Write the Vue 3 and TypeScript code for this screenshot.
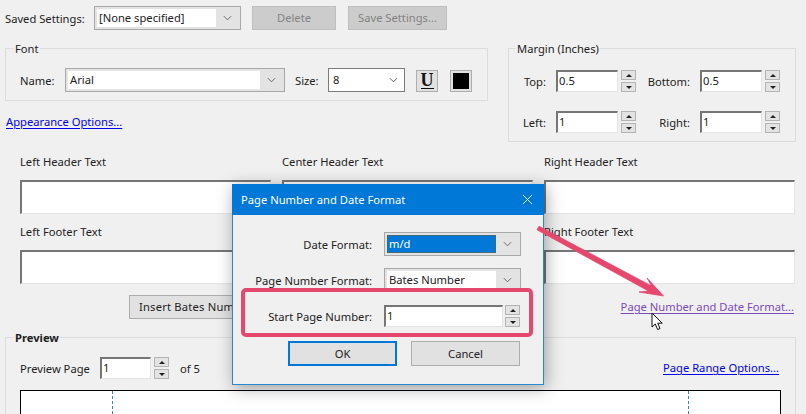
<script setup lang="ts">
const marginRows = [
  [{ label: 'Top:', value: '0.5' }, { label: 'Bottom:', value: '0.5' }],
  [{ label: 'Left:', value: '1' }, { label: 'Right:', value: '1' }],
]
const headerFields = [
  'Left Header Text', 'Center Header Text', 'Right Header Text',
  'Left Footer Text', '', 'Right Footer Text',
]
</script>

<template>
  <div class="page">
    <div class="top-row">
      <span class="saved-label">Saved Settings:</span>
      <div class="select saved-select">
        <span class="select-value">[None specified]</span>
        <svg class="chev" viewBox="0 0 10 6"><path d="M1 1l4 4 4-4" /></svg>
      </div>
      <button class="btn disabled delete-btn">Delete</button>
      <button class="btn disabled save-btn">Save Settings...</button>
    </div>

    <div class="groups">
      <div class="left-col">
        <div class="group font-group">
          <span class="legend">Font</span>
          <span class="name-label">Name:</span>
          <div class="select name-select">
            <span class="select-value">Arial</span>
            <svg class="chev" viewBox="0 0 10 6"><path d="M1 1l4 4 4-4" /></svg>
          </div>
          <span class="size-label">Size:</span>
          <div class="select size-select">
            <span class="select-value">8</span>
            <svg class="chev" viewBox="0 0 10 6"><path d="M1 1l4 4 4-4" /></svg>
          </div>
          <button class="icon-btn u-btn"><span class="u-glyph">U</span></button>
          <button class="icon-btn color-btn"><span class="swatch"></span></button>
        </div>
        <a class="link appearance">Appearance Options...</a>
      </div>

      <div class="group margin-group">
        <span class="legend margin-legend">Margin (Inches)</span>
        <div v-for="(row, r) in marginRows" :key="r" class="margin-row">
          <template v-for="f in row" :key="f.label">
            <span class="margin-label">{{ f.label }}</span>
            <div class="input margin-input">{{ f.value }}</div>
            <div class="spin">
              <span class="spin-btn"><i class="up"></i></span>
              <span class="spin-btn"><i class="down"></i></span>
            </div>
          </template>
        </div>
      </div>
    </div>

    <div class="text-grid">
      <div v-for="(f, i) in headerFields" :key="i" class="text-field">
        <span class="text-label">{{ f }}</span>
        <div class="input text-input"></div>
      </div>
    </div>

    <div class="bates-row">
      <button class="btn bates-btn">Insert Bates Number...</button>
      <a class="link visited">Page Number and Date Format...</a>
    </div>

    <div class="group preview-group">
      <span class="legend bold">Preview</span>
      <div class="preview-row">
        <span class="preview-label">Preview Page</span>
        <div class="input preview-input">1</div>
        <div class="spin">
          <span class="spin-btn"><i class="up"></i></span>
          <span class="spin-btn"><i class="down"></i></span>
        </div>
        <span class="of-label">of 5</span>
        <a class="link range-link">Page Range Options...</a>
      </div>
      <div class="preview-box">
        <span class="guide guide-left"></span>
        <span class="guide guide-right"></span>
      </div>
    </div>

    <div class="dialog">
      <div class="title-bar">
        <span>Page Number and Date Format</span>
        <svg class="close" viewBox="0 0 12 12"><path d="M1 1l10 10M11 1L1 11" /></svg>
      </div>
      <div class="dialog-body">
        <div class="dialog-row date-row">
          <span class="dialog-label">Date Format:</span>
          <div class="select dialog-select">
            <span class="select-value selected">m/d</span>
            <svg class="chev" viewBox="0 0 10 6"><path d="M1 1l4 4 4-4" /></svg>
          </div>
        </div>
        <div class="dialog-row number-row">
          <span class="dialog-label">Page Number Format:</span>
          <div class="select dialog-select">
            <span class="select-value">Bates Number</span>
            <svg class="chev" viewBox="0 0 10 6"><path d="M1 1l4 4 4-4" /></svg>
          </div>
        </div>
        <div class="dialog-row start-row">
          <span class="dialog-label">Start Page Number:</span>
          <div class="input start-input">1</div>
          <div class="spin">
            <span class="spin-btn"><i class="up"></i></span>
            <span class="spin-btn"><i class="down"></i></span>
          </div>
        </div>
        <div class="dialog-actions">
          <button class="btn dlg-btn primary">OK</button>
          <button class="btn dlg-btn">Cancel</button>
        </div>
      </div>
    </div>

    <div class="highlight"></div>

    <svg class="arrow" viewBox="0 0 806 414">
      <path d="M539 226.200L651.400 285.900L647 278L663.500 296L639 292L648.600 291.100L537 229.800Z" fill="#e5476d" stroke="#e5476d" stroke-width="0.800" stroke-linejoin="round" />
    </svg>

    <svg class="cursor" viewBox="0 0 13 19">
      <path d="M1 1v14l3.300-3 2.300 5.500 2.400-1-2.300-5.300h4.500Z" fill="#fff" stroke="#111" stroke-width="1" stroke-linejoin="round" />
    </svg>
  </div>
</template>

<style>
html, body { margin: 0; background: #f0f0f0; }
</style>

<style scoped>
.page {
  position: relative;
  width: 806px;
  height: 414px;
  overflow: hidden;
  box-sizing: border-box;
  padding-top: 5px;
  background: #f0f0f0;
  color: #222;
  font: 11.2px/16px "Noto Sans", "Open Sans", sans-serif;
}
.page * { box-sizing: border-box; }

.top-row { display: flex; align-items: center; height: 25px; padding-left: 5px; }
.saved-label { width: 89px; position: relative; top: 1px; }
.saved-select { width: 147px; height: 24px; }
.delete-btn { width: 84px; height: 24px; margin-left: 11px; }
.save-btn { width: 99px; height: 24px; margin-left: 12px; }

.select {
  display: flex;
  align-items: center;
  border: 1px solid #a8a8a8;
  background: #e3e3e3;
  padding: 2px;
}
.select-value {
  flex: 1;
  height: 100%;
  background: #fff;
  padding-left: 2px;
  line-height: 17px;
}
.select-value.selected {
  background: #0078d7;
  color: #fff;
  outline: 1px dotted #7a5a20;
  outline-offset: -1px;
}
.chev { width: 9px; height: 6px; margin: 0 6px 0 7px; flex: none; }
.chev path { fill: none; stroke: #666; stroke-width: 1.100; }

.btn {
  font: inherit;
  color: #222;
  background: #e1e1e1;
  border: 1px solid #adadad;
  padding: 0;
}
.btn.disabled { background: #ccc; border-color: #bfbfbf; color: #838383; }

.groups { display: flex; align-items: flex-start; margin-top: 18px; }
.left-col { width: 508px; padding-left: 5px; }
.group { position: relative; border: 1px solid #dcdcdc; }
.legend {
  position: absolute;
  top: -8px;
  left: 8px;
  padding: 0 1px 0 1px;
  background: #f0f0f0;
}
.margin-legend { left: 7px; }
.legend.bold { font-weight: 700; }

.font-group {
  display: flex;
  align-items: center;
  width: 483px;
  height: 53px;
  padding: 10px 0 0 14px;
}
.name-label { width: 45px; position: relative; top: 1px; }
.name-select { width: 220px; height: 24px; }
.size-label { margin-left: 10px; width: 33px; position: relative; top: 1px; }
.size-select { width: 77px; height: 24px; border-color: #7a7a7a; background: #fff; padding: 2px 0 2px 2px; }
.icon-btn {
  display: flex;
  align-items: center;
  justify-content: center;
  width: 22px;
  height: 22px;
  padding: 0;
  margin-top: 2px;
  background: #e1e1e1;
  border: 1px solid #adadad;
}
.u-btn { margin-left: 11px; }
.color-btn { margin-left: 12px; }
.u-glyph {
  font: 700 18px/15px "Liberation Serif", serif;
  color: #111;
  border-bottom: 1.500px solid #111;
  padding: 0;
}
.swatch { width: 16px; height: 16px; background: #000; }

.link { color: #0000ee; text-decoration: underline; text-underline-offset: 2px; }
.link.visited { color: #7d4bb8; }
.appearance { display: block; margin: 13px 0 0 1px; }

.margin-group { width: 288px; height: 94px; padding-top: 21px; }
.margin-row { display: grid; grid-template-columns: 47px 62px 15px 67px 62px 15px; align-items: center; height: 22px; margin-bottom: 19px; }
.margin-label { text-align: right; padding-right: 10px; white-space: nowrap; position: relative; top: 1px; }
.margin-row .spin { margin-left: 3px; }

.input {
  border-style: solid;
  border-width: 2px 1.500px 1.500px 2px;
  border-color: #767676 #e4e4e4 #e4e4e4 #767676;
  background: #fff;
  padding-left: 1px;
  line-height: 17px;
}
.margin-input { height: 22px; }

.spin { display: flex; flex-direction: column; justify-content: space-between; width: 15px; height: 22px; }
.spin-btn {
  display: flex;
  align-items: center;
  justify-content: center;
  height: 10px;
  background: #e3e3e3;
  border: 1px solid #b4b4b4;
}
.spin i { width: 0; height: 0; border-left: 3px solid transparent; border-right: 3px solid transparent; }
.spin i.up { border-bottom: 3px solid #222; }
.spin i.down { border-top: 3px solid #222; }

.text-grid {
  display: grid;
  grid-template-columns: repeat(3, 251px);
  column-gap: 11px;
  row-gap: 9px;
  margin: 11px 0 0 20px;
}
.text-label { display: block; height: 16px; margin-bottom: 11px; padding-top: 1px; }
.text-input { height: 34px; }

.bates-row { display: flex; align-items: center; height: 24px; margin-top: 11px; padding-left: 129px; }
.bates-btn { width: 250px; height: 24px; text-align: left; padding-left: 9px; letter-spacing: 0.2px; }
.bates-row .link { margin-left: auto; margin-right: 12px; }

.preview-group { width: 791px; height: 120px; margin: 18px 0 0 5px; padding: 19px 0 0 14px; }
.preview-row { display: flex; align-items: center; height: 22px; }
.preview-label { width: 80px; position: relative; top: 1px; }
.preview-input { width: 51px; height: 22px; }
.preview-row .spin { margin-left: 3px; }
.of-label { margin-left: 11px; position: relative; top: 1px; }
.range-link { margin-left: auto; margin-right: 16px; }
.preview-box {
  position: relative;
  width: 761px;
  height: 40px;
  margin-top: 11px;
  background: #fff;
  border: 1px solid #000;
}
.guide { position: absolute; top: 0; bottom: 0; border-left: 1px dashed #3f7fc4; }
.guide-left { left: 91px; }
.guide-right { left: 667px; }

.dialog {
  position: absolute;
  left: 232px;
  top: 184px;
  width: 312px;
  height: 201px;
  background: #f0f0f0;
  border: 1px solid #2b87cf;
  box-shadow: 2px 3px 16px rgba(0, 0, 0, 0.35);
}
.title-bar {
  display: flex;
  align-items: center;
  justify-content: space-between;
  height: 31px;
  margin: -1px -1px 0;
  padding: 0 11px 0 9px;
  background: #0078d7;
  color: #fff;
}
.close { width: 11px; height: 11px; }
.close path { stroke: #fff; stroke-width: 1; fill: none; }
.dialog-body { padding-top: 17px; }
.dialog-row { display: flex; align-items: center; height: 24px; }
.number-row { margin-top: 12px; }
.start-row { margin-top: 13px; height: 22px; }
.dialog-label { width: 139px; text-align: right; margin-right: 12px; position: relative; top: 1px; }
.dialog-select { width: 137px; height: 24px; }
.start-input { width: 119px; height: 22px; }
.start-row .spin { margin-left: 2px; }
.dialog-actions { display: flex; gap: 14px; margin: 14px 0 0 55px; }
.dlg-btn { width: 109px; height: 25px; }
.dlg-btn.primary { border: 2px solid #0078d7; }

.highlight {
  position: absolute;
  left: 241px;
  top: 288px;
  width: 292px;
  height: 49px;
  border: 4px solid #e5476d;
  border-radius: 5px;
}
.arrow { position: absolute; left: 0; top: 0; width: 806px; height: 414px; pointer-events: none; }
.cursor { position: absolute; left: 651px; top: 312px; width: 13px; height: 19px; }
</style>
